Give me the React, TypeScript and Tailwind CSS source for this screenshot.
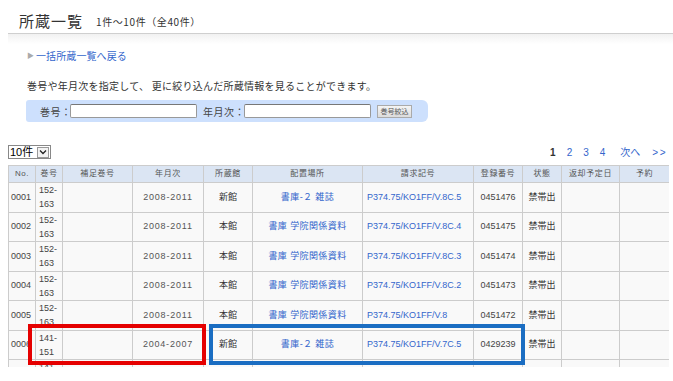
import React from "react";

type Row = {
  no: string;
  vol: [string, string];
  sub: string;
  years: string;
  lib: string;
  place: string;
  call: string;
  reg: string;
  status: string;
};

const rows: Row[] = [
  { no: "0001", vol: ["152-", "163"], sub: "", years: "2008-2011", lib: "新館", place: "書庫-２ 雑誌", call: "P374.75/KO1FF/V.8C.5", reg: "0451476", status: "禁帯出" },
  { no: "0002", vol: ["152-", "163"], sub: "", years: "2008-2011", lib: "本館", place: "書庫 学院関係資料", call: "P374.75/KO1FF/V.8C.4", reg: "0451475", status: "禁帯出" },
  { no: "0003", vol: ["152-", "163"], sub: "", years: "2008-2011", lib: "本館", place: "書庫 学院関係資料", call: "P374.75/KO1FF/V.8C.3", reg: "0451474", status: "禁帯出" },
  { no: "0004", vol: ["152-", "163"], sub: "", years: "2008-2011", lib: "本館", place: "書庫 学院関係資料", call: "P374.75/KO1FF/V.8C.2", reg: "0451473", status: "禁帯出" },
  { no: "0005", vol: ["152-", "163"], sub: "", years: "2008-2011", lib: "本館", place: "書庫 学院関係資料", call: "P374.75/KO1FF/V.8", reg: "0451472", status: "禁帯出" },
  { no: "0006", vol: ["141-", "151"], sub: "", years: "2004-2007", lib: "新館", place: "書庫-２ 雑誌", call: "P374.75/KO1FF/V.7C.5", reg: "0429239", status: "禁帯出" },
  { no: "0007", vol: ["141-", "151"], sub: "", years: "2004-2007", lib: "新館", place: "書庫-２ 雑誌", call: "P374.75/KO1FF/V.7C.4", reg: "0429238", status: "禁帯出" },
];

const heads = ["No.", "巻号", "補足巻号", "年月次", "所蔵館", "配置場所", "請求記号", "登録番号", "状態", "返却予定日", "予約"];
const widths = ["w-[27px]", "w-[27px]", "w-[70px]", "w-[71px]", "w-[49px]", "w-[110px]", "w-[111px]", "w-[49px]", "w-[39px]", "w-[58px]", "w-[50px]"];

const td = "border border-[#cccccc] bg-[#f9f9f9] p-0 align-middle";

export default function App() {
  return (
    <div className="relative w-[673px] h-[381px] overflow-hidden bg-white text-[#333] font-['Noto_Sans_CJK_JP',sans-serif]">
      {/* page header */}
      <div className="ml-[8px] h-[34px] pt-[8px] pl-[11px] flex items-center gap-[13px] border-b border-[#cfcfcf]">
        <span className="text-[15px] leading-none tracking-[1px] text-[#333]">所蔵一覧</span>
        <span className="text-[10px] leading-none tracking-[0.6px] text-[#333] pt-[3px]">1件～10件（全40件）</span>
      </div>
      <div className="ml-[8px] h-[10px] bg-gradient-to-b from-[#f1f1f1] to-white" />

      <div className="ml-[27px] mt-[4px] flex items-center gap-[2px] h-[14px] text-[10px]">
        <span className="text-[7px] text-[#aaaaaa]">▶</span>
        <a className="text-[#3366cc] tracking-[0.1px]">一括所蔵一覧へ戻る</a>
      </div>

      <p className="ml-[27px] mt-[17px] h-[14px] leading-[14px] text-[10px] tracking-[0.25px] whitespace-nowrap text-[#333]">
        巻号や年月次を指定して、 更に絞り込んだ所蔵情報を見ることができます。
      </p>

      <div className="ml-[26px] mt-[7px] w-[402px] h-[22px] bg-[#cde0fd] rounded-r-[6px] rounded-l-[3px] flex items-center text-[10px] text-[#444] whitespace-nowrap">
        <span className="ml-[14px] w-[30px] shrink-0 tracking-[0.5px]">巻号：</span>
        <div className="w-[127px] shrink-0 h-[14px] bg-white border border-[#999] border-t-[#777] rounded-[2px]" />
        <span className="ml-[6px] w-[41px] shrink-0 tracking-[0.5px]">年月次：</span>
        <div className="w-[127px] shrink-0 h-[14px] bg-white border border-[#999] border-t-[#777] rounded-[2px]" />
        <button className="ml-[6px] w-[35px] shrink-0 h-[13px] bg-gradient-to-b from-[#f4f4f4] to-[#dcdcdc] border border-[#aaaaaa] text-[7px] leading-none text-[#555]">
          巻号絞込
        </button>
      </div>

      {/* per page + pagination */}
      <div className="mt-[22px] ml-[8px] w-[659px] h-[15px] flex items-end justify-between">
        <div className="flex items-center h-[14px] w-[43px] border border-[#888] bg-white">
          <span className="pl-[1px] text-[11px] leading-none text-black font-['Liberation_Sans','Noto_Sans_CJK_JP',sans-serif]">10件</span>
          <span className="ml-auto mr-[1px] w-[12px] h-[11px] border border-[#999] bg-[#f3f3f3] flex items-center justify-center">
            <svg width="8" height="6" viewBox="0 0 8 6">
              <path d="M1 1.5 L4 4.5 L7 1.5" fill="none" stroke="#222" strokeWidth="1.3" />
            </svg>
          </span>
        </div>
        <div className="flex items-center gap-[11px] text-[10px] leading-none font-['Liberation_Sans','Noto_Sans_CJK_JP',sans-serif] pb-[1px]">
          <span className="font-bold text-[#333]">1</span>
          <a className="text-[#3366cc]">2</a>
          <a className="text-[#3366cc]">3</a>
          <a className="text-[#3366cc]">4</a>
          <a className="text-[#3366cc] ml-[4px]">次へ</a>
          <a className="text-[#3366cc] ml-[1px] tracking-[1.5px]">&gt;&gt;</a>
        </div>
      </div>

      {/* holdings table */}
      <div className="mt-[6px] ml-[8px] w-[661px] h-[202px] overflow-hidden">
        <table className="table-fixed w-[661px] border-collapse text-[9px] font-['Liberation_Sans','Noto_Sans_CJK_JP',sans-serif]">
          <colgroup>
            {widths.map((w, i) => (
              <col key={i} className={w} />
            ))}
          </colgroup>
          <thead>
            <tr className="h-[17px]">
              {heads.map((h) => (
                <th key={h} className="border border-[#cccccc] bg-[#dbe5f3] p-0 text-[8px] font-normal text-[#555] tracking-[0.6px] text-center">
                  {h}
                </th>
              ))}
            </tr>
          </thead>
          <tbody>
            {rows.map((r) => (
              <tr key={r.no} className="h-[29.5px]">
                <td className={`${td} pl-[2px] text-[#444]`}>{r.no}</td>
                <td className={`${td} pl-[3px] text-[#444] leading-[14px]`}>
                  {r.vol[0]}
                  <br />
                  {r.vol[1]}
                </td>
                <td className={td}>{r.sub}</td>
                <td className={`${td} text-center text-[#555] tracking-[0.8px]`}>{r.years}</td>
                <td className={`${td} text-center text-[#333]`}>{r.lib}</td>
                <td className={`${td} text-center text-[#3366cc] tracking-[0.4px]`}>{r.place}</td>
                <td className={`${td} pl-[4px] text-[#3366cc]`}>{r.call}</td>
                <td className={`${td} text-center text-[#444]`}>{r.reg}</td>
                <td className={`${td} text-center text-[#333]`}>{r.status}</td>
                <td className={td} />
                <td className={td} />
              </tr>
            ))}
          </tbody>
        </table>
      </div>

      {/* highlight boxes */}
      <div className="absolute left-[28px] top-[324px] w-[178px] h-[41px] border-4 border-[#e50000]" />
      <div className="absolute left-[209px] top-[324px] w-[316px] h-[41px] border-4 border-[#1a6dc2]" />
    </div>
  );
}
